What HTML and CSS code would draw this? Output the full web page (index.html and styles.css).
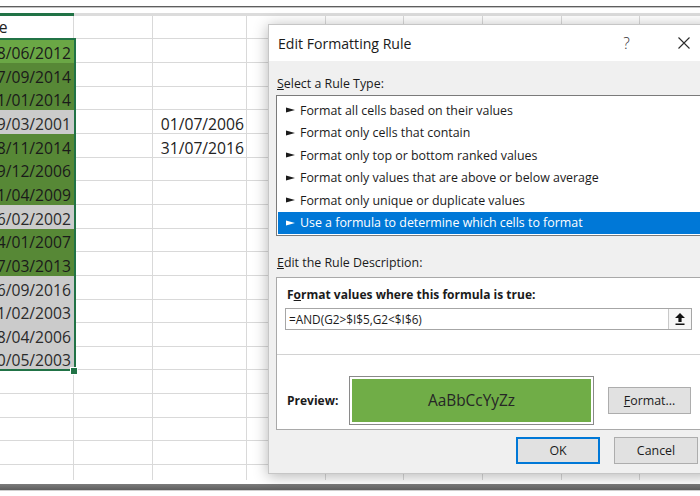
FILE: index.html
```html
<!DOCTYPE html>
<html>
<head>
<meta charset="utf-8">
<title>Edit Formatting Rule</title>
<link rel="stylesheet" href="styles.css">
</head>
<body>
<div class="screen">
  <div class="topline"></div>
  <div class="sheet">
    <div class="colhead"></div>
    <div class="rows">
      <div class="row head"><div class="cell left">Date</div><div class="cell"></div><div class="cell"></div></div>
      <div class="row"><div class="cell act">18/06/2012</div><div class="cell"></div><div class="cell"></div></div>
      <div class="row"><div class="cell g">27/09/2014</div><div class="cell"></div><div class="cell"></div></div>
      <div class="row"><div class="cell g">31/01/2014</div><div class="cell"></div><div class="cell"></div></div>
      <div class="row"><div class="cell y">19/03/2001</div><div class="cell"></div><div class="cell">01/07/2006</div></div>
      <div class="row"><div class="cell g">28/11/2014</div><div class="cell"></div><div class="cell">31/07/2016</div></div>
      <div class="row"><div class="cell g">29/12/2006</div><div class="cell"></div><div class="cell"></div></div>
      <div class="row"><div class="cell g">21/04/2009</div><div class="cell"></div><div class="cell"></div></div>
      <div class="row"><div class="cell y">16/02/2002</div><div class="cell"></div><div class="cell"></div></div>
      <div class="row"><div class="cell g">24/01/2007</div><div class="cell"></div><div class="cell"></div></div>
      <div class="row"><div class="cell g">17/03/2013</div><div class="cell"></div><div class="cell"></div></div>
      <div class="row"><div class="cell y">26/09/2016</div><div class="cell"></div><div class="cell"></div></div>
      <div class="row"><div class="cell y">11/02/2003</div><div class="cell"></div><div class="cell"></div></div>
      <div class="row"><div class="cell y">28/04/2006</div><div class="cell"></div><div class="cell"></div></div>
      <div class="row"><div class="cell y">30/05/2003</div><div class="cell"></div><div class="cell"></div></div>
      <div class="row"></div>
      <div class="row"></div>
      <div class="row"></div>
      <div class="row"></div>
      <div class="row partial"></div>
    </div>
    <div class="selection"></div>
    <div class="fill-handle"></div>
  </div>
  <div class="bottomband"></div>

  <div class="dialog">
    <div class="titlebar">
      <span class="title">Edit Formatting Rule</span>
      <span class="tb-btn help">?</span>
      <span class="tb-btn close">
        <svg width="12" height="12" viewBox="0 0 12 12"><path d="M0.5 0.5 L11.5 11.5 M11.5 0.5 L0.5 11.5" stroke="#2b2b2b" stroke-width="1.1" fill="none"/></svg>
      </span>
    </div>
    <div class="body">
      <div class="label"><u>S</u>elect a Rule Type:</div>
      <div class="listbox">
        <div class="item"><svg class="arrow" width="9" height="6" viewBox="0 0 9 6"><path d="M0 0.6 L9 3 L0 5.4 Z"/></svg>Format all cells based on their values</div>
        <div class="item"><svg class="arrow" width="9" height="6" viewBox="0 0 9 6"><path d="M0 0.6 L9 3 L0 5.4 Z"/></svg>Format only cells that contain</div>
        <div class="item"><svg class="arrow" width="9" height="6" viewBox="0 0 9 6"><path d="M0 0.6 L9 3 L0 5.4 Z"/></svg>Format only top or bottom ranked values</div>
        <div class="item"><svg class="arrow" width="9" height="6" viewBox="0 0 9 6"><path d="M0 0.6 L9 3 L0 5.4 Z"/></svg>Format only values that are above or below average</div>
        <div class="item"><svg class="arrow" width="9" height="6" viewBox="0 0 9 6"><path d="M0 0.6 L9 3 L0 5.4 Z"/></svg>Format only unique or duplicate values</div>
        <div class="item selected"><svg class="arrow" width="9" height="6" viewBox="0 0 9 6"><path d="M0 0.6 L9 3 L0 5.4 Z"/></svg>Use a formula to determine which cells to format</div>
      </div>
      <div class="label desc-label"><u>E</u>dit the Rule Description:</div>
      <div class="descbox">
        <div class="formula-sec">
          <div class="bold-label">F<u>o</u>rmat values where this formula is true:</div>
          <div class="input">
            <span class="input-text">=AND(G2&gt;$I$5,G2&lt;$I$6)</span>
            <span class="ref-btn">
              <svg width="10" height="12" viewBox="0 0 10 12"><path d="M5 0 L10 5 L6.6 5 L6.6 9 L3.4 9 L3.4 5 L0 5 Z M0.5 10.4 H9.5 V12 H0.5 Z" fill="#111"/></svg>
            </span>
          </div>
        </div>
        <div class="preview-sec">
          <div class="bold-label preview-label">Preview:</div>
          <div class="preview"><div class="preview-fill">AaBbCcYyZz</div></div>
          <div class="btn format-btn"><u>F</u>ormat...</div>
        </div>
      </div>
      <div class="buttons">
        <div class="btn ok">OK</div>
        <div class="btn">Cancel</div>
      </div>
    </div>
  </div>
</div>
</body>
</html>
```

FILE: styles.css
```css
* { box-sizing: border-box; }
html, body { margin: 0; padding: 0; background: #ffffff; }

.screen {
  position: relative;
  width: 700px;
  height: 496px;
  overflow: hidden;
  background: #ffffff;
  font-family: "Open Sans", "Noto Sans", sans-serif;
}

.topline {
  margin-top: 6px;
  height: 1px;
  background: #5e5e5e;
  box-shadow: 0 1px 0 #c4c4c4;
}

/* ---------- spreadsheet ---------- */
.sheet {
  position: relative;
  margin-top: 6px;
  margin-left: -30px;
  width: 760px;
  font-size: 15.7px;
  color: #222222;
}

.colhead {
  height: 3px;
  background: linear-gradient(to right, #217346 0 104px, #dcdcdc 104px);
}

.rows {
  background-image: linear-gradient(to right,
    transparent 0 103px, #d9d9d9 103px 104px,
    transparent 104px 182px, #d9d9d9 182px 183px,
    transparent 183px 276px, #d9d9d9 276px 277px,
    transparent 277px 355px, #d9d9d9 355px 356px,
    transparent 356px 433px, #d9d9d9 433px 434px,
    transparent 434px 512px, #d9d9d9 512px 513px,
    transparent 513px 591px, #d9d9d9 591px 592px,
    transparent 592px 669px, #d9d9d9 669px 670px,
    transparent 670px);
}

.row {
  display: grid;
  grid-template-columns: 104px 79px 94px;
  height: 23.67px;
  border-bottom: 1px solid #d9d9d9;
}
.row.head { height: 23.3px; }
.row.partial { height: 14.6px; border-bottom: 0; }

.cell {
  display: flex;
  align-items: flex-end;
  justify-content: flex-end;
  margin-bottom: -1px;
  padding: 0 3px 1px 3px;
  line-height: 18px;
  white-space: nowrap;
  overflow: hidden;
}
.cell.left { justify-content: flex-start; padding-bottom: 3.5px; }
.cell.act { background: #6aa745; color: #1a1a1a; }
.cell.g { background: #578836; color: #1a1a1a; }
.cell.y { background: #cbcbcb; color: #2a2a2a; }

.selection {
  position: absolute;
  left: 0;
  top: 25.3px;
  width: 106px;
  height: 332.7px;
  border: 2px solid #217346;
  pointer-events: none;
}
.fill-handle {
  position: absolute;
  left: 101px;
  top: 355px;
  width: 6px;
  height: 6px;
  background: #217346;
  outline: 1px solid #ffffff;
}

.bottomband {
  margin-top: 4px;
  height: 6px;
  background: linear-gradient(#7c7c7c, #5e5e5e);
  box-shadow: 0 1px 0 #cfcfcf;
}

/* ---------- dialog ---------- */
.dialog {
  position: absolute;
  left: 268px;
  top: 24px;
  width: 444px;
  height: 450px;
  background: #f0f0f0;
  border: 1px solid #c6c6c6;
  box-shadow: 0 2px 14px rgba(0, 0, 0, 0.3);
  display: flex;
  flex-direction: column;
  color: #1b1b1b;
  font-size: 12.4px;
}

.titlebar {
  height: 36px;
  background: #ffffff;
  display: flex;
  align-items: center;
  padding: 0 4.5px 0 9px;
}
.title {
  font-size: 14.1px;
  color: #1a1a1a;
  flex: 1;
}
.tb-btn {
  width: 46px;
  height: 36px;
  display: flex;
  align-items: center;
  justify-content: center;
  color: #333333;
}
.help {
  font-size: 15.5px;
  font-weight: 300;
  margin-right: 11px;
}

.body {
  flex: 1;
  display: flex;
  flex-direction: column;
  padding: 0 7px 9px 7px;
}

.label {
  margin-top: 14px;
  margin-left: 1px;
  height: 18px;
  line-height: 18px;
}
.desc-label { margin-top: 18px; }

.listbox {
  margin-top: 2px;
  background: #ffffff;
  border: 1px solid #7a7a7a;
  padding: 3px 1px 1px 1px;
}
.item {
  height: 22.5px;
  display: flex;
  align-items: center;
  padding-left: 8px;
  white-space: nowrap;
  color: #1b1b1b;
}
.item .arrow { margin-right: 5px; fill: #1b1b1b; }
.item.selected { background: #0078d7; color: #ffffff; }
.item.selected .arrow { fill: #ffffff; }

.descbox {
  margin-top: 5px;
  height: 153px;
  background: #ffffff;
  border: 1px solid #a9a9a9;
  display: flex;
  flex-direction: column;
}
.formula-sec {
  padding: 8px 11px 0 8px;
  height: 77px;
  border-bottom: 1px solid #d2d2d2;
}
.bold-label {
  font-weight: 700;
  font-size: 12px;
  line-height: 18px;
  margin-left: 2px;
  white-space: nowrap;
}
.input {
  margin-top: 4px;
  height: 22px;
  border: 1px solid #a6a6a6;
  display: flex;
  align-items: center;
}
.input-text {
  flex: 1;
  padding-left: 3px;
  font-size: 11.8px;
  white-space: nowrap;
}
.ref-btn {
  width: 23px;
  height: 20px;
  border-left: 1px solid #c9c9c9;
  background: #f6f6f6;
  display: flex;
  align-items: center;
  justify-content: center;
}

.preview-sec {
  flex: 1;
  display: flex;
  align-items: center;
  padding: 17px 0 0 8px;
}
.preview-label { width: 62px; }
.preview {
  width: 245px;
  height: 49px;
  border: 1px solid #8a8a8a;
  padding: 2px;
  background: #ffffff;
}
.preview-fill {
  height: 100%;
  background: #70ad47;
  display: flex;
  align-items: center;
  justify-content: center;
  font-size: 15.4px;
  color: #262626;
}

.btn {
  width: 84px;
  height: 27px;
  background: #e1e1e1;
  border: 1px solid #adadad;
  display: flex;
  align-items: center;
  justify-content: center;
  color: #1b1b1b;
}
.format-btn { width: 83px; margin-left: 14px; }

.buttons {
  margin-top: 7px;
  display: flex;
  justify-content: flex-end;
  gap: 14px;
  padding-right: 6px;
}
.btn.ok { border: 2px solid #0078d7; }
```
